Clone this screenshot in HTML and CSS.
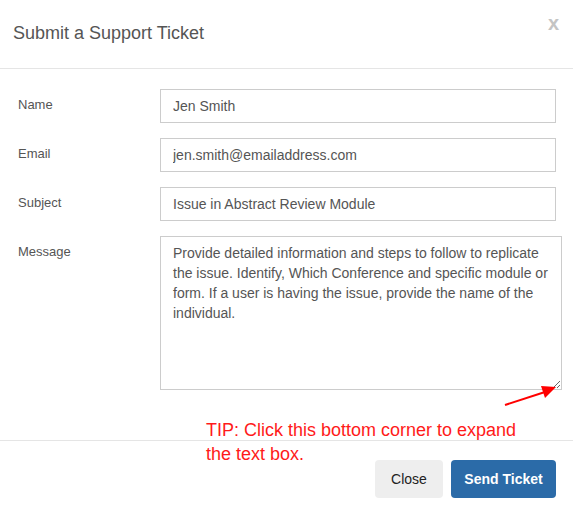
FILE: index.html
```html
<!DOCTYPE html>
<html>
<head>
<meta charset="utf-8">
<link rel="stylesheet" href="styles.css">
</head>
<body>
<div class="modal">
  <div class="modal-header">
    <h4 class="modal-title">Submit a Support Ticket</h4>
    <span class="close">x</span>
  </div>
  <div class="modal-body">
    <div class="row">
      <label class="label">Name</label>
      <input class="field" type="text" value="Jen Smith">
    </div>
    <div class="row">
      <label class="label">Email</label>
      <input class="field" type="text" value="jen.smith@emailaddress.com">
    </div>
    <div class="row">
      <label class="label">Subject</label>
      <input class="field" type="text" value="Issue in Abstract Review Module">
    </div>
    <div class="row">
      <label class="label">Message</label>
      <textarea class="field area">Provide detailed information and steps to follow to replicate the issue. Identify, Which Conference and specific module or form. If a user is having the issue, provide the name of the individual.</textarea>
    </div>
  </div>
  <div class="modal-footer">
    <button class="btn btn-default">Close</button>
    <button class="btn btn-primary">Send Ticket</button>
  </div>
  <div class="tip">TIP: Click this bottom corner to expand<br>the text box.</div>
  <svg class="arrow" width="60" height="26" viewBox="0 0 60 26">
    <line x1="2" y1="22" x2="42" y2="9" stroke="#ff0000" stroke-width="2"/>
    <polygon points="53,4 38,3 42,15" fill="#ff0000"/>
  </svg>
</div>
</body>
</html>
```
FILE: styles.css
```css
* { box-sizing: border-box; }
html, body { margin: 0; padding: 0; background: #fff; }
body { font-family: "Liberation Sans", Arial, sans-serif; color: #555; }
.modal { position: relative; width: 573px; height: 516px; }
.modal-header {
  height: 69px;
  border-bottom: 1px solid #e5e5e5;
  display: flex;
  align-items: flex-start;
  justify-content: space-between;
  padding: 22px 14px 0 13px;
}
.modal-title { margin: 0; font-size: 18px; font-weight: normal; color: #555; line-height: 22px; }
.close { font-size: 20px; font-weight: bold; color: #c4c4c4; line-height: 20px; margin-top: -9px; }
.modal-body { padding: 20px 18px 0 18px; height: 372px; border-bottom: 1px solid #e5e5e5; }
.row { display: grid; grid-template-columns: 142px 1fr; margin-bottom: 15px; }
.label { font-size: 13px; color: #555; padding-top: 8px; }
.field {
  width: 396px; height: 34px;
  border: 1px solid #ccc;
  padding: 6px 12px;
  font-family: "Liberation Sans", Arial, sans-serif;
  font-size: 14px; color: #555;
  border-radius: 0;
  outline: none;
}
.area { width: 402px; height: 154px; line-height: 20px; padding: 6px 12px; resize: both; }
.modal-footer { display: flex; justify-content: flex-end; gap: 8px; padding: 19px 17px 0 0; }
.btn {
  height: 38px; border: none; border-radius: 4px;
  font-family: "Liberation Sans", Arial, sans-serif; font-size: 14px;
  padding: 0; white-space: nowrap;
}
.btn-default { background: #eeeeee; color: #222; width: 68px; }
.btn-primary { background: #2b6ba8; color: #fff; font-weight: bold; width: 105px; }
.tip { position: absolute; left: 206px; top: 418px; color: #ff1a1a; font-size: 18px; line-height: 24px; }
.arrow { position: absolute; left: 503px; top: 383px; }
```
